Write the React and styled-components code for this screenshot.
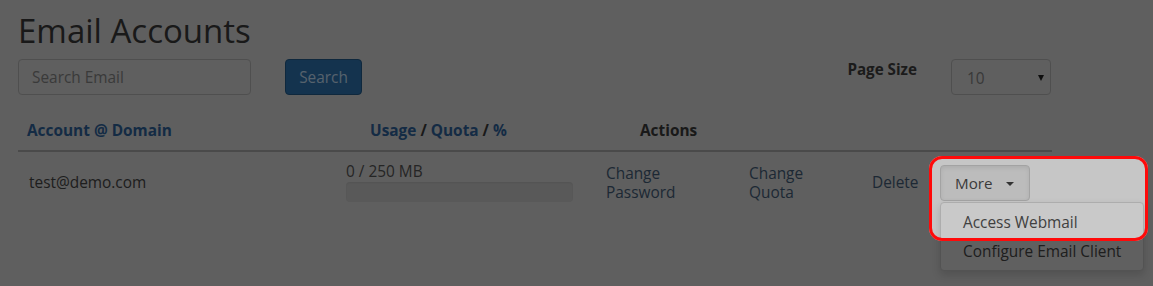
import React from "react";
import styled, { createGlobalStyle } from "styled-components";

const Global = createGlobalStyle`
  html, body { margin: 0; padding: 0; }
  body {
    background: #c6c6c6;
    font-family: "Open Sans", "Liberation Sans", sans-serif;
    color: #3f3f3f;
    overflow: hidden;
  }
`;

const Page = styled.div`
  position: relative;
  width: 1153px;
  height: 286px;
  padding: 0 18px;
  box-sizing: border-box;
`;

const Title = styled.h1`
  margin: 0;
  padding-top: 9px;
  font-size: 33px;
  font-weight: 400;
  line-height: 43px;
  color: #363636;
`;

const Toolbar = styled.div`
  display: flex;
  align-items: flex-start;
  margin-top: 7px;
  width: 1034px;
`;

const SearchInput = styled.input`
  box-sizing: border-box;
  width: 233px;
  height: 36px;
  padding: 0 13px;
  border: 1px solid #a6a6a6;
  border-radius: 4px;
  background: #c6c6c6;
  font-family: inherit;
  font-size: 15.4px;
  color: #555;
  outline: none;
  &::placeholder { color: #7a7a7a; }
`;

const PrimaryButton = styled.button`
  box-sizing: border-box;
  margin-left: 34px;
  width: 77px;
  height: 36px;
  border: 1px solid #21547f;
  border-radius: 4px;
  background: #2a6ba4;
  color: #b4cce2;
  font-family: inherit;
  font-size: 15.4px;
  padding: 0;
`;

const Spacer = styled.div`
  flex: 1;
`;

const Label = styled.span`
  font-size: 15.2px;
  font-weight: 700;
  color: #3a3a3a;
  margin-top: 0;
  margin-right: 34px;
`;

const Select = styled.div`
  box-sizing: border-box;
  position: relative;
  width: 100px;
  height: 36px;
  border: 1px solid #a6a6a6;
  border-radius: 4px;
  display: flex;
  align-items: center;
  padding: 2px 15px 0;
  font-size: 15.4px;
  color: #777;
  margin-right: 1px;
  &::after {
    content: "";
    position: absolute;
    right: 6px;
    top: 15px;
    border-left: 3.5px solid transparent;
    border-right: 3.5px solid transparent;
    border-top: 6px solid #1e1e1e;
  }
`;

const Table = styled.div`
  display: grid;
  grid-template-columns: 319px 260px 143px 123px 68px 121px;
  width: 1034px;
  margin-top: 17px;
`;

const HeadCell = styled.div`
  grid-column: ${(p) => p.$span || "auto"};
  padding: 9px 0 9px ${(p) => p.$pad || 9}px;
  font-size: 15.4px;
  font-weight: 700;
  line-height: 20px;
  color: ${(p) => (p.$plain ? "#353535" : "#2b5a8f")};
  border-bottom: 2px solid #9c9c9c;
`;

const Slash = styled.span`
  color: #353535;
`;

const Cell = styled.div`
  position: relative;
  height: 61px;
  padding-left: ${(p) => p.$pad ?? 9}px;
  display: flex;
  flex-direction: column;
  justify-content: center;
  font-size: 15.4px;
  line-height: 19px;
  color: #404040;
`;

const ActionLink = styled.a`
  color: #3d556e;
  text-decoration: none;
  font-size: 15.4px;
  line-height: 19px;
  display: block;
  width: 80px;
`;

const Usage = styled.div`
  font-size: 15.4px;
  line-height: 18px;
  color: #4e4e4e;
`;

const Progress = styled.div`
  box-sizing: border-box;
  width: 227px;
  height: 20px;
  margin-top: 1px;
  border-radius: 4px;
  background: #bbbbbb;
  box-shadow: inset 0 1px 2px rgba(0, 0, 0, 0.08);
`;

const MoreButton = styled.button`
  box-sizing: border-box;
  width: 90px;
  height: 36px;
  border: 1px solid #a3a3a3;
  border-radius: 4px;
  background: #bcbcbc;
  box-shadow: inset 0 2px 4px rgba(0, 0, 0, 0.08);
  font-family: inherit;
  font-size: 15.2px;
  color: #3a3a3a;
  display: flex;
  align-items: center;
  padding: 0 0 0 14px;
  gap: 13px;
  margin-top: 0;
`;

const Caret = styled.span`
  width: 0;
  height: 0;
  border-left: 4px solid transparent;
  border-right: 4px solid transparent;
  border-top: 4px solid #333;
  margin-top: 2px;
`;

const Menu = styled.ul`
  position: absolute;
  left: 9px;
  top: 50px;
  z-index: 5;
  box-sizing: border-box;
  width: 204px;
  margin: 0;
  padding: 5px 0 4px;
  list-style: none;
  background: #c9c9c9;
  border: 1px solid #adadad;
  border-radius: 4px;
  box-shadow: 0 4px 8px rgba(0, 0, 0, 0.15);
`;

const MenuItem = styled.li`
  padding: 0 22px;
  height: 29px;
  line-height: 29px;
  font-size: 15.4px;
  color: #404040;
  white-space: nowrap;
`;

const Spotlight = styled.div`
  position: absolute;
  left: 929px;
  top: 156px;
  width: 219px;
  height: 85px;
  box-sizing: border-box;
  border: 3px solid #ff0a0a;
  border-radius: 13px;
  box-shadow: 0 0 0 3000px rgba(0, 0, 0, 0.52);
  z-index: 10;
  pointer-events: none;
`;

export default function App() {
  return (
    <>
      <Global />
      <Page>
        <Title>Email Accounts</Title>
        <Toolbar>
          <SearchInput placeholder="Search Email" />
          <PrimaryButton>Search</PrimaryButton>
          <Spacer />
          <Label>Page Size</Label>
          <Select>10</Select>
        </Toolbar>
        <Table>
          <HeadCell>Account @ Domain</HeadCell>
          <HeadCell $pad={33}>
            Usage <Slash>/</Slash> Quota <Slash>/</Slash> %
          </HeadCell>
          <HeadCell $span="3 / span 4" $pad={43} $plain>
            Actions
          </HeadCell>

          <Cell $pad={11}>test@demo.com</Cell>
          <Cell>
            <Usage>0 / 250 MB</Usage>
            <Progress />
          </Cell>
          <Cell>
            <ActionLink href="#">Change Password</ActionLink>
          </Cell>
          <Cell>
            <ActionLink href="#">Change Quota</ActionLink>
          </Cell>
          <Cell>
            <ActionLink href="#">Delete</ActionLink>
          </Cell>
          <Cell>
            <MoreButton>
              More <Caret />
            </MoreButton>
            <Menu>
              <MenuItem>Access Webmail</MenuItem>
              <MenuItem>Configure Email Client</MenuItem>
            </Menu>
          </Cell>
        </Table>
        <Spotlight />
      </Page>
    </>
  );
}
